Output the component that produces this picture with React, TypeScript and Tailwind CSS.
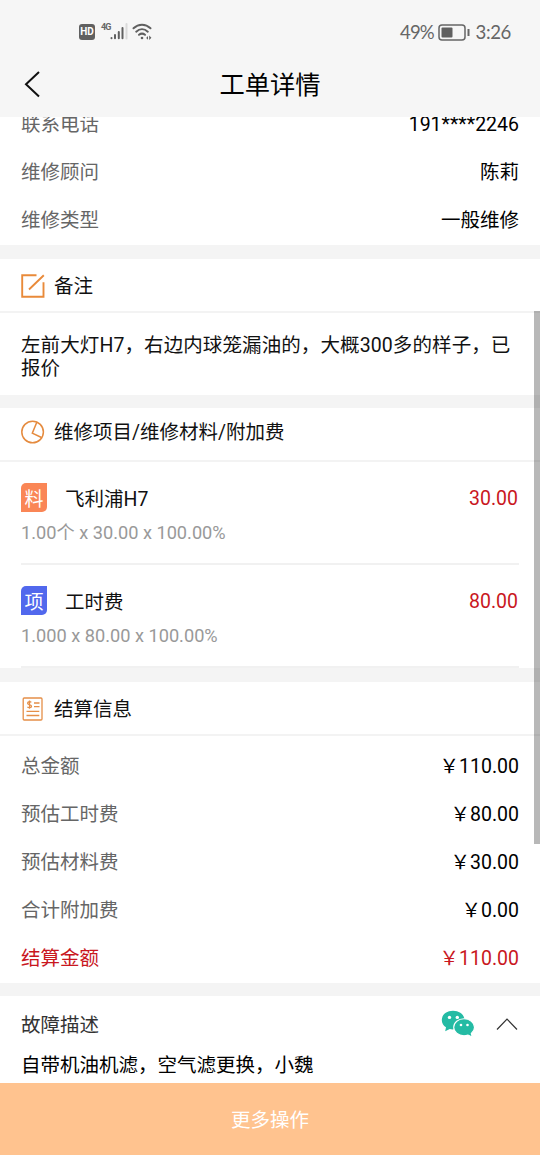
import type { ReactNode } from "react";

function Row({ label, value, red = false }: { label: string; value: string; red?: boolean }) {
  return (
    <div className={"flex h-12 items-center justify-between pl-[21px] pr-[21px] " + (red ? "text-[#c9171e]" : "text-black")}>
      <span className={red ? "" : "text-[#666]"}>{label}</span>
      <span>{value}</span>
    </div>
  );
}

function SectionHeader({ icon, title, className = "pt-px" }: { icon: ReactNode; title: string; className?: string }) {
  return (
    <div className={"flex h-[54px] items-center gap-[9px] border-b-2 border-[#f3f3f3] pl-[21px] text-[#111] " + className}>
      <span className="flex w-6 justify-center">{icon}</span>
      <span className="pt-px">{title}</span>
    </div>
  );
}

function Item({ tag, tagClass, name, price, detail }: { tag: string; tagClass: string; name: string; price: string; detail: string }) {
  return (
    <div className="mx-[21px] h-[103px] border-b-2 border-[#f1f1f1] pt-[21px]">
      <div className="flex h-[29px] items-center">
        <span className={"flex h-[29px] w-[26px] items-center justify-center rounded-tl-[5px] rounded-br-[5px] pt-[3px] text-[19px] leading-none text-white " + tagClass}>
          {tag}
        </span>
        <span className="ml-[18px] pt-[3px] text-[#111]">{name}</span>
        <span className="ml-auto pt-[2px] pr-px text-[#c9171e]">{price}</span>
      </div>
      <div className="mt-[8px] text-[18.2px] leading-[26px] text-[#999]">{detail}</div>
    </div>
  );
}

const Gap = ({ className }: { className: string }) => <div className={"bg-[#f4f4f4] " + className} />;

const EditIcon = () => (
  <svg width="24" height="24" viewBox="0 0 24 24" fill="none" stroke="#e98a3a" strokeWidth="1.9">
    <path d="M15.5 1.2H1.2v21.5h21.3V8.2M8 15.5 22.8 1.2" />
  </svg>
);

const PieIcon = () => (
  <svg width="24" height="24" viewBox="0 0 24 24" fill="none" stroke="#e58b3f" strokeWidth="1.5">
    <circle cx="11.6" cy="12" r="10.8" />
    <path d="M15.8 2.2 11.3 13.2 20.5 17.5" />
  </svg>
);

const BillIcon = () => (
  <svg width="22" height="24" viewBox="0 0 22 24" fill="none" stroke="#e58f48" strokeWidth="1.3">
    <rect x="1.2" y="1" width="18.8" height="22" rx="1" />
    <path d="M9.3 5.4C8.5 4.4 5.6 4.4 5.6 6.2c0 1.9 3.9 1 3.9 3 0 1.9-3.1 1.8-4.1.7M7.5 3.6v8.1M12 6h5.5M12 9.7h5.5M4.5 14.3h12.8M4.5 18.5h12.8" />
  </svg>
);

const WeChatIcon = () => (
  <svg width="34" height="27" viewBox="0 0 34 27">
    <path fill="#24bba4" d="M12 .8C5.5.8.8 4.8.8 10c0 3.2 1.6 5.6 4.2 7.3l-.8 4 4.6-2.2c1.4.3 2.8.4 4.2.2C19 18.8 23.5 15 23.5 10 23.5 4.8 18.5.8 12 .8Z" />
    <path fill="#24bba4" stroke="#fff" strokeWidth="1.1" d="M23 8.8c-5.7 0-10.3 3.7-10.3 8.5s4.6 8.4 10.3 8.4c1.5 0 2.7-.2 4-.6l4.2 1.8-.9-3.5c2-1.5 3.2-3.6 3.2-6.1 0-4.8-4.8-8.5-10.5-8.5Z" />
    <g fill="#fff">
      <circle cx="8.5" cy="7.4" r="1.7" />
      <circle cx="16.3" cy="7.4" r="1.7" />
      <circle cx="20" cy="15" r="1.3" />
      <circle cx="26.5" cy="15" r="1.3" />
    </g>
  </svg>
);

function StatusBar() {
  return (
    <div className="flex h-[51px] items-center justify-between pt-[13px] pr-[29px] pl-[79px] text-[#666]">
      <div className="flex h-[18px] items-start">
        <span className="mt-px flex h-[16px] w-[16px] items-center justify-center rounded-[3px] bg-[#606060] font-['Roboto',sans-serif] text-[10px] font-bold leading-none text-white">
          HD
        </span>
        <span className="ml-[6px] w-[10px] font-['Roboto',sans-serif] text-[9px] font-bold leading-[9px] tracking-[-0.9px]">4G</span>
        <svg className="-ml-px" width="18" height="17" viewBox="0 0 18 17" fill="none" strokeWidth="2" strokeLinecap="round">
          <path d="M1.5 15v.2M5 12v3.3M8.8 9v6.3M12.5 5v10.3" stroke="#606060" />
          <path d="M16.5 1v14.5" stroke="#dadada" />
        </svg>
        <svg className="ml-[4px]" width="22" height="18" viewBox="0 0 22 18" fill="none" stroke="#606060" strokeWidth="2" strokeLinecap="round">
          <path d="M1.5 5.2C6.5.5 13.5.5 18.5 5.2M4.2 8.7c3.5-3.2 8.1-3.2 11.6 0M7 11.8c2-1.6 4-1.6 6 0" />
          <circle cx="10" cy="15" r="1.3" fill="#606060" stroke="none" />
          <path d="m16 13-1.8 1.9 1.8 1.8ZM17.2 12.6v4.3l2.2-2.1Z" fill="#606060" stroke="none" />
        </svg>
      </div>
      <div className="flex items-center font-['Lato',sans-serif] text-[18.6px] leading-[20px]">
        <span className="tracking-[-1px]">49%</span>
        <svg className="ml-[4px]" width="32" height="17" viewBox="0 0 32 17">
          <rect x="1" y="1" width="26" height="15" rx="3" fill="none" stroke="#666" strokeWidth="1.5" />
          <rect x="3.5" y="3.5" width="11" height="10" rx="1" fill="#606060" />
          <path d="M30.5 5v7" stroke="#666" strokeWidth="2" />
        </svg>
        <span className="ml-[6px] tracking-[-0.4px]">3:26</span>
      </div>
    </div>
  );
}

export default function App() {
  return (
    <div className="relative flex h-[1155px] w-[540px] flex-col overflow-hidden bg-white font-['Roboto','Noto_Sans_CJK_SC',sans-serif] text-[19.5px] leading-[23px] text-black">
      <header className="h-[117px] shrink-0 bg-[#f6f6f6]">
        <StatusBar />
        <div className="grid h-[66px] grid-cols-[1fr_auto_1fr] items-center">
          <svg className="ml-[23px]" width="18" height="28" viewBox="0 0 18 28" fill="none" stroke="#111" strokeWidth="2">
            <path d="M16 2 3 14.3 16 26.5" />
          </svg>
          <h1 className="pt-[3px] text-[25.3px] leading-none">工单详情</h1>
        </div>
      </header>

      <main className="h-[966px] shrink-0 overflow-hidden">
        <section className="-mt-[17px] h-[145px]">
          <Row label="联系电话" value="191****2246" />
          <Row label="维修顾问" value="陈莉" />
          <Row label="维修类型" value="一般维修" />
        </section>
        <Gap className="h-[14px]" />
        <section className="h-[136px]">
          <SectionHeader icon={<EditIcon />} title="备注" />
          <p className="pt-[21px] pr-[21px] pl-[21px] tracking-[0.1px] text-[#111]">左前大灯H7，右边内球笼漏油的，大概300多的样子，已报价</p>
        </section>
        <Gap className="h-[13px]" />
        <section className="h-[260px]">
          <SectionHeader icon={<PieIcon />} title="维修项目/维修材料/附加费" className="pb-[4px]" />
          <Item tag="料" tagClass="bg-[#fa8656]" name="飞利浦H7" price="30.00" detail="1.00个 x 30.00 x 100.00%" />
          <Item tag="项" tagClass="bg-[#5168ed]" name="工时费" price="80.00" detail="1.000 x 80.00 x 100.00%" />
        </section>
        <Gap className="h-[14px]" />
        <section className="h-[301px]">
          <SectionHeader icon={<BillIcon />} title="结算信息" />
          <div className="pt-[6px]">
            <Row label="总金额" value="￥110.00" />
            <Row label="预估工时费" value="￥80.00" />
            <Row label="预估材料费" value="￥30.00" />
            <Row label="合计附加费" value="￥0.00" />
            <Row label="结算金额" value="￥110.00" red />
          </div>
        </section>
        <Gap className="h-[13px]" />
        <section className="px-[21px]">
          <div className="flex h-[56px] items-center text-[#333]">
            <span className="pt-[2px]">故障描述</span>
            <span className="ml-auto -mt-[2px]"><WeChatIcon /></span>
            <svg className="ml-[20px]" width="24" height="14" viewBox="0 0 24 14" fill="none" stroke="#333" strokeWidth="1.2">
              <path d="M2 12.5 12 2l10 10.5" />
            </svg>
          </div>
          <p className="pt-[2px]">自带机油机滤，空气滤更换，小魏</p>
        </section>
      </main>

      <button className="h-[72px] shrink-0 bg-[#ffc38f] pt-[3px] text-white">更多操作</button>
      <div className="absolute top-[311px] right-0 h-[533px] w-[6px] bg-black/28" />
    </div>
  );
}
